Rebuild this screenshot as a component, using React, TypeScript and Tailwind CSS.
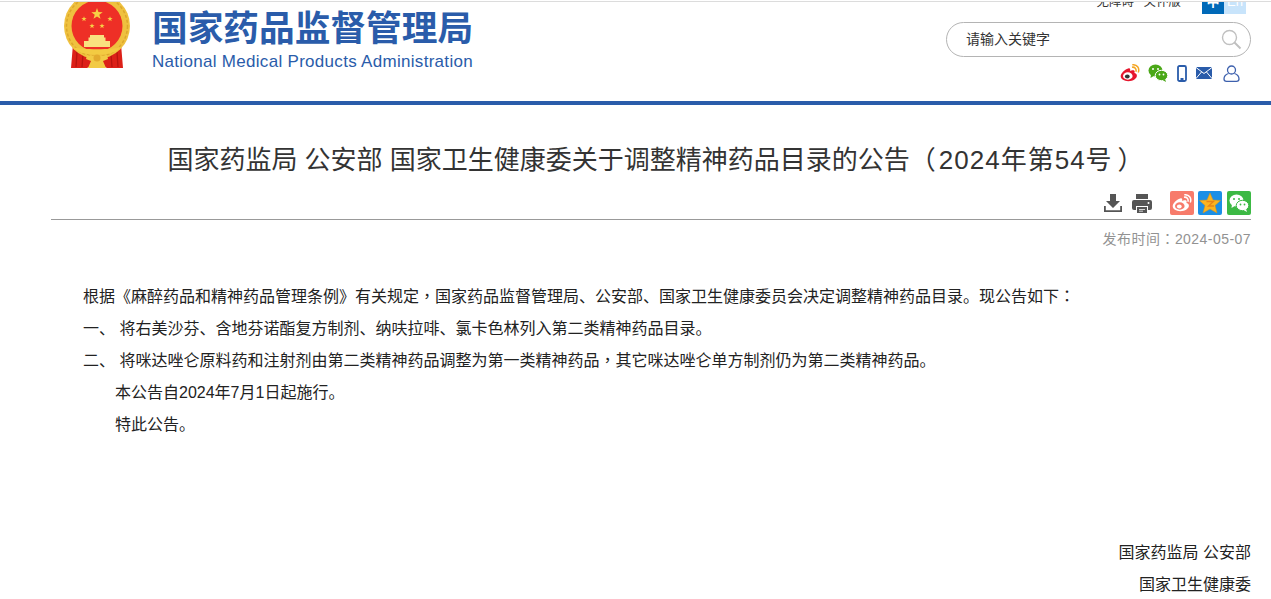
import React from "react";

function T({ children }: { children: React.ReactNode }) {
  return <span className="font-['Noto_Sans_CJK_TC',sans-serif] leading-none">{children}</span>;
}

function Star({ x, y, r }: { x: number; y: number; r: number }) {
  const pts: string[] = [];
  for (let i = 0; i < 10; i++) {
    const a = (Math.PI / 5) * i - Math.PI / 2;
    const rr = i % 2 === 0 ? r : r * 0.4;
    pts.push(`${(x + rr * Math.cos(a)).toFixed(2)},${(y + rr * Math.sin(a)).toFixed(2)}`);
  }
  return <polygon points={pts.join(" ")} fill="#f7cf45" />;
}

function Emblem() {
  return (
    <svg width="68" height="70" viewBox="0 0 68 70" className="block">
      <path d="M10 42 L8 66 H24 L34 61 L44 66 H60 L58 42 Z" fill="#dc2018" />
      <path d="M14 50l-1 15M20 52l-1 13M54 50l1 15M48 52l1 13" stroke="#b8140f" strokeWidth="1.300" />
      <circle cx="34" cy="24" r="33" fill="#efc13f" />
      <circle cx="34" cy="24" r="30.500" fill="none" stroke="#dca82c" strokeWidth="1.500" strokeDasharray="3 2" />
      <circle cx="34" cy="24" r="25.500" fill="#ee2f26" />
      <Star x={34} y={12} r={6} />
      <Star x={21} y={17} r={2.800} />
      <Star x={47} y={17} r={2.800} />
      <Star x={29} y={24} r={2.800} />
      <Star x={39} y={24} r={2.800} />
      <path d="M27 33h14v2.500h1.500V39H47v6H21v-6h4.500v-3.500H27z" fill="#f9e27f" />
      <path d="M10 45c6 3 42 3 48 0 -4 6-14 7.500-24 7.500S14 51 10 45z" fill="#f3cb42" />
      <path d="M24 53c4 1.500 16 1.500 20 0l1 4-5 2 3 7H25l3-7-5-2z" fill="#f2ca45" />
      <circle cx="34" cy="56" r="3.500" fill="#e3ab2e" />
    </svg>
  );
}

function Weibo({ color = "#e6162d" }: { color?: string }) {
  const white = color === "#fff";
  return (
    <svg width="20" height="18" viewBox="0 0 20 18">
      <path d="M8.200 4.500C4.400 5.800.7 9.400.7 12.300c0 2.800 3.500 4.900 7.600 4.900 5 0 8.600-3 8.600-5.500 0-1.700-1.500-2.300-2.500-2.600.5-1.400.4-2.400-.6-2.800-1.200-.4-3 .4-3.700.7.300-1.300.2-3.400-1.900-2.500z" fill={color} />
      <ellipse cx="7.800" cy="12" rx="4.800" ry="3.700" fill={white ? "#f77b6b" : "#fff"} />
      <ellipse cx="7.300" cy="12.400" rx="2.400" ry="2" fill={white ? "#fff" : "#333"} />
      <path d="M12 3.200c2.800-.5 4.700 1.800 3.900 4.600M12.300.8c4.700-.6 7.600 3.400 6 7.600" stroke={white ? "#fff" : "#f5a623"} strokeWidth="1.500" fill="none" />
    </svg>
  );
}

function Wechat({ a = "#4ba818", b = "#4ba818", cut = "#fff" }: { a?: string; b?: string; cut?: string }) {
  return (
    <svg width="20" height="18" viewBox="0 0 20 18">
      <ellipse cx="7.500" cy="6.500" rx="7" ry="6" fill={a} />
      <path d="M3 10l-.5 4 4-2.500z" fill={a} />
      <ellipse cx="13.500" cy="11.500" rx="6.300" ry="5.200" fill={b} stroke={cut} strokeWidth="1" />
      <path d="M17 15l1 3-3.500-2z" fill={b} />
      <circle cx="5" cy="5" r="1" fill={cut} />
      <circle cx="10" cy="5" r="1" fill={cut} />
      <circle cx="11.500" cy="10.500" r=".9" fill={cut} />
      <circle cx="15.500" cy="10.500" r=".9" fill={cut} />
    </svg>
  );
}

function Phone() {
  return (
    <svg width="10" height="17" viewBox="0 0 10 17">
      <rect x="1" y="1" width="8" height="15" rx="1.500" fill="#fff" stroke="#2a5caa" strokeWidth="1.800" />
      <rect x="3.500" y="13" width="3" height="2" fill="#2a5caa" />
    </svg>
  );
}

function Mail() {
  return (
    <svg width="16" height="12" viewBox="0 0 16 12">
      <rect width="16" height="12" rx="1" fill="#2a5caa" />
      <path d="M0 .5l8 6 8-6M0 11.500l5.500-6.500M16 11.500l-5.500-6.500" stroke="#fff" strokeWidth="1" fill="none" />
    </svg>
  );
}

function User() {
  return (
    <svg width="17" height="17" viewBox="0 0 17 17" fill="none" stroke="#3d60ad" strokeWidth="1.300">
      <circle cx="8.500" cy="5" r="4" />
      <path d="M5.500 8.500C2.500 9.500 1 11.500 1 14c0 1.500 1 2.300 2.500 2.300h10c1.500 0 2.500-.8 2.500-2.300 0-2.500-1.500-4.500-4.500-5.500" />
    </svg>
  );
}

function Download() {
  return (
    <svg width="18" height="18" viewBox="0 0 18 18" fill="#555">
      <path d="M6 0h6v7h4l-7 7-7-7h4z" />
      <path d="M0 12h1.800v4.200h14.400V12H18v6H0z" />
    </svg>
  );
}

function Printer() {
  return (
    <svg width="20" height="19" viewBox="0 0 20 19" fill="#555">
      <path d="M4 0h12v5H4z" />
      <path d="M2 6h16a2 2 0 0 1 2 2v6a2 2 0 0 1-2 2h-2v-4H4v4H2a2 2 0 0 1-2-2V8a2 2 0 0 1 2-2z" />
      <path d="M5 13h10v6H5z" />
      <path d="M7 15h6v.8H7zM7 16.800h4v.8H7z" fill="#fff" />
      <circle cx="16.500" cy="9" r="1" fill="#fff" />
    </svg>
  );
}

function Qzone() {
  return (
    <svg width="24" height="24" viewBox="0 0 24 24">
      <rect width="24" height="24" rx="2" fill="#1b8fe6" />
      <polygon points="12,2 15,9 22.500,9.500 17,14.500 19,22 12,18 5,22 7,14.500 1.500,9.500 9,9" fill="#fbb41f" stroke="#d9921a" strokeWidth=".5" />
      <path d="M8.500 10.500h7l-5 4.500h5.500" stroke="#e8841a" strokeWidth="1.300" fill="none" />
    </svg>
  );
}

export default function App() {
  return (
    <div className="h-[599px] w-[1271px] overflow-hidden bg-white font-['Liberation_Sans','Noto_Sans_CJK_SC',sans-serif] text-[#333]">
      <header className="h-[104px] border-t border-t-[#dcdcdc] border-b-[4px] border-b-[#2a5caa] mt-px flex justify-between">
        <div className="flex pl-[63px]">
          <div className="w-[68px] h-[70px] overflow-hidden">
            <Emblem />
          </div>
          <div className="ml-[21px] pt-[6px]">
            <div className="text-[35.7px] leading-[42px] font-bold text-[#2a5caa] whitespace-nowrap">国家药品监督管理局</div>
            <div className="text-[17px] leading-[20px] mt-[2px] text-[#2a5caa] whitespace-nowrap tracking-[0.3px]">National Medical Products Administration</div>
          </div>
        </div>
        <div className="w-[305px] mr-[20px] flex flex-col items-end">
          <div className="h-[12px] w-full overflow-hidden flex items-end justify-end pr-[5px]">
            <span className="text-[12.5px] leading-[18px] mr-[9.5px] whitespace-nowrap -translate-y-[3px]">无障碍</span>
            <span className="text-[12.5px] leading-[18px] mr-[21px] whitespace-nowrap -translate-y-[3px]">关怀版</span>
            <span className="w-[22px] h-[12px] bg-[#0069b8] text-white text-[13px] leading-[18px] font-bold flex justify-center items-end overflow-hidden">
              <span className="translate-y-[-3px] leading-[13px] block h-[13px] shrink-0 relative top-[-3px]">中</span>
            </span>
            <span className="w-[22px] h-[12px] bg-[#c8e4fb] text-white text-[13px] flex justify-center items-end overflow-hidden">
              <span className="leading-[13px] block h-[13px] shrink-0 relative top-[-6px]">En</span>
            </span>
          </div>
          <div className="mt-[8px] w-[305px] h-[35px] rounded-[18px] border border-[#b4b4b4] flex items-center justify-between pl-[19px] pr-[8px] shrink-0">
            <span className="text-[14px]">请输入关键字</span>
            <svg width="21" height="21" viewBox="0 0 21 21" fill="none" stroke="#c0c0c0" strokeWidth="1.400">
              <circle cx="8.500" cy="8.500" r="7" />
              <path d="M13.500 13.500l6 6" strokeWidth="2" />
            </svg>
          </div>
          <div className="flex items-center mt-[7px] pr-[11px]">
            <Weibo />
            <span className="ml-[8px]"><Wechat /></span>
            <span className="ml-[9px]"><Phone /></span>
            <span className="ml-[9px]"><Mail /></span>
            <span className="ml-[11px]"><User /></span>
          </div>
        </div>
      </header>

      <main className="pl-[51px] pr-[20px]">
        <h1 className="text-center text-[26px] leading-[36px] font-normal pt-[37px] pl-[9px] text-[#333] whitespace-nowrap">
          国家药监局 公安部 国家卫生健康委关于调整精神药品目录的公告<T>（</T><span className="ml-[3px] mr-[5px] tracking-[1px]">2024年第54号</span><T>）</T>
        </h1>
        <div className="h-[29px] mt-[13px] border-b border-[#999] flex items-start justify-end">
          <span className="mt-[3px]"><Download /></span>
          <span className="ml-[10px] mt-[3px]"><Printer /></span>
          <span className="ml-[18px] w-[24px] h-[24px] rounded-[2px] bg-[#f77b6b] flex items-center justify-center"><Weibo color="#fff" /></span>
          <span className="ml-[4px]"><Qzone /></span>
          <span className="ml-[5px] w-[24px] h-[24px] rounded-[2px] bg-[#3cb944] flex items-center justify-center"><Wechat a="#fff" b="#fff" cut="#3cb944" /></span>
        </div>
        <div className="text-right text-[14px] leading-[20px] text-[#929292] mt-[9px] tracking-[0.45px]">发布时间<T>：</T>2024-05-07</div>
        <article className="mt-[32px] text-[16px] leading-[32px] text-[#222] pl-[32px]">
          <p>根据《麻醉药品和精神药品管理条例》有关规定<T>，</T>国家药品监督管理局、公安部、国家卫生健康委员会决定调整精神药品目录。现公告如下<T>：</T></p>
          <p>一、&nbsp;将右美沙芬、含地芬诺酯复方制剂、纳呋拉啡、氯卡色林列入第二类精神药品目录。</p>
          <p>二、&nbsp;将咪达唑仑原料药和注射剂由第二类精神药品调整为第一类精神药品<T>，</T>其它咪达唑仑单方制剂仍为第二类精神药品。</p>
          <p className="indent-[32px]">本公告自2024年7月1日起施行。</p>
          <p className="indent-[32px]">特此公告。</p>
          <p className="text-right mt-[96px]">国家药监局 公安部</p>
          <p className="text-right">国家卫生健康委</p>
        </article>
      </main>
    </div>
  );
}
